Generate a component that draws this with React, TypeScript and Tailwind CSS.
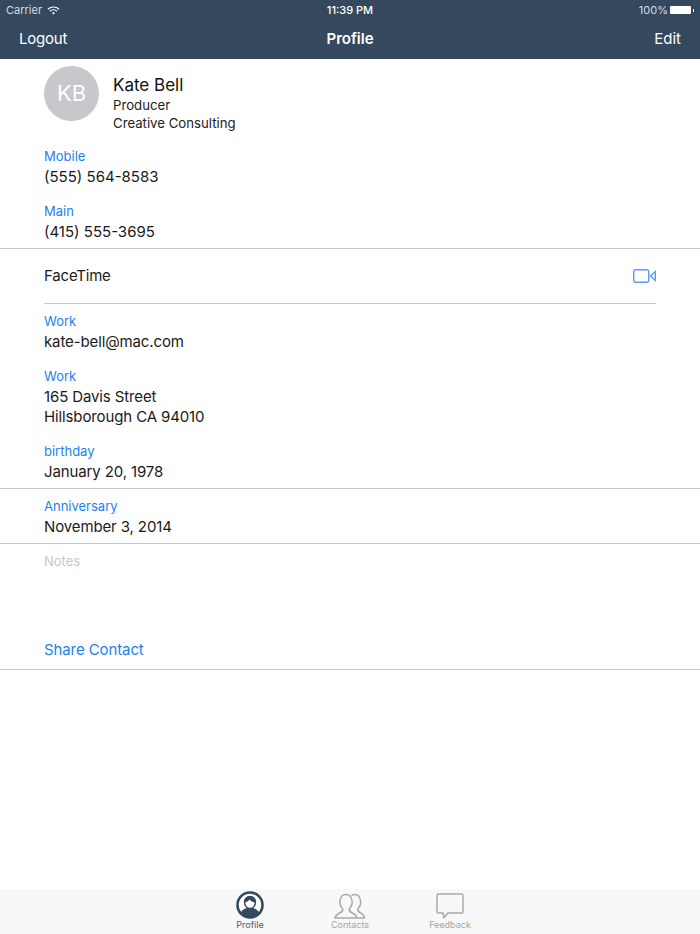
const font = "font-['Inter','Liberation_Sans',sans-serif]";

function Field({ label, lines, h, noteColor, wide }: { label: string; lines: string[]; h: string; noteColor?: boolean; wide?: boolean }) {
  return (
    <div className={`px-11 ${h}`}>
      <div className={`text-[13px] leading-[21px] ${noteColor ? "text-[#c7c7cc]" : "text-[#1d7ff2]"}`}>{label}</div>
      {lines.map((l) => (
        <div key={l} className={`text-[15px] leading-[20px] text-[#1a1a1a] ${wide ? "" : "tracking-[-0.12px]"}`}>{l}</div>
      ))}
    </div>
  );
}

function Tab({ label, active, children }: { label: string; active?: boolean; children: React.ReactNode }) {
  return (
    <div className="w-[100px] flex flex-col items-center">
      <div className="h-[28px] flex items-end">{children}</div>
      <div className={`text-[9px] leading-[11px] ${active ? "text-[#4a5a6c]" : "text-[#a5a5a5]"}`}>{label}</div>
    </div>
  );
}

export default function App() {
  return (
    <div className={`${font} w-[700px] h-[934px] bg-white flex flex-col overflow-hidden`}>
      <div className="h-[59px] bg-[#34495e] text-white shrink-0">
        <div className="h-[20px] grid grid-cols-3 items-center px-[6px] text-[11px]">
          <div className="flex items-center gap-[5px] text-[#d5dbe1]">
            Carrier
            <svg width="13" height="9" viewBox="0 0 13 9" fill="none" stroke="#fff" strokeWidth="1.2">
              <path d="M1 3.2a8 8 0 0 1 11 0M3 5.2a5 5 0 0 1 7 0" />
              <path d="M6.5 8.6 4.9 6.9a2.3 2.3 0 0 1 3.2 0z" fill="#fff" stroke="none" />
            </svg>
          </div>
          <div className="text-center font-medium">11:39 PM</div>
          <div className="flex items-center justify-end gap-[2px] text-[#d5dbe1]">
            100%
            <div className="w-[21px] h-[8px] bg-white rounded-[1px]" />
            <div className="w-[1px] h-[3px] bg-white" />
          </div>
        </div>
        <div className="h-[39px] grid grid-cols-3 items-center px-[19px] text-[15px]">
          <span className="tracking-[-0.2px]">Logout</span>
          <span className="font-semibold text-center">Profile</span>
          <span className="text-right">Edit</span>
        </div>
      </div>

      <div className="flex-1">
        <div className="h-[81px] pl-11 pt-[7px] flex gap-[14px]">
          <div className="w-[55px] h-[55px] rounded-full bg-[#c7c7cc] text-white text-[22px] flex items-center justify-center">KB</div>
          <div className="pt-[8px]">
            <div className="text-[17px] leading-[22px] text-[#111]">Kate Bell</div>
            <div className="text-[13.2px] leading-[18px] text-[#222]">Producer</div>
            <div className="text-[13.2px] leading-[18px] text-[#222]">Creative Consulting</div>
          </div>
        </div>
        <Field label="Mobile" lines={["(555) 564-8583"]} h="h-[55px] pt-[6px]" wide />
        <Field label="Main" lines={["(415) 555-3695"]} h="h-[53px] pt-[6px]" wide />
        <div className="h-px bg-[#c8c8c8]" />
        <div className="mx-11 h-[55px] flex items-center justify-between border-b border-[#c8c8c8] text-[15px] tracking-[-0.2px] text-[#1a1a1a]">
          FaceTime
          <svg width="23" height="14" viewBox="0 0 23 14" fill="none" stroke="#5b9bf8" strokeWidth="1.4">
            <rect x="0.7" y="0.7" width="15" height="12.600" rx="2" />
            <path d="M17.500 7 22.300 2.500v9z" />
          </svg>
        </div>
        <Field label="Work" lines={["kate-bell@mac.com"]} h="h-[55px] pt-[7px]" />
        <Field label="Work" lines={["165 Davis Street", "Hillsborough CA 94010"]} h="h-[75px] pt-[7px]" />
        <Field label="birthday" lines={["January 20, 1978"]} h="h-[54px] pt-[7px]" />
        <div className="h-px bg-[#c8c8c8]" />
        <Field label="Anniversary" lines={["November 3, 2014"]} h="h-[54px] pt-[7px]" />
        <div className="h-px bg-[#c8c8c8]" />
        <Field label="Notes" lines={[]} h="h-[91px] pt-[7px]" noteColor />
        <div className="px-11 h-[35px] pt-[3px] text-[15px] tracking-[-0.1px] leading-[24px] text-[#1d7ff2] border-b border-[#c8c8c8]">Share Contact</div>
      </div>

      <div className="h-[45px] bg-[#f8f8f8] flex justify-center shrink-0 pt-[2px]">
        <Tab label="Profile" active>
          <svg width="28" height="28" viewBox="0 0 28 28">
            <circle cx="14" cy="14" r="12.5" fill="#fff" stroke="#34495e" strokeWidth="2.6" />
            <path d="M4.500 22c1.500-3.500 5-4.500 7.500-5.500h4c2.500 1 6 2 7.500 5.500a12 12 0 0 1-19 0z" fill="#34495e" />
            <path d="M14 5.500c-3.500 0-5.500 2.500-5.500 5.500 0 3 2 6.500 5.500 6.500s5.500-3.500 5.500-6.500c0-3-2-5.500-5.500-5.500z" fill="#fff" stroke="#34495e" strokeWidth="1.400" />
            <path d="M8.500 11.500c2.500-.5 4-1.500 5-3 1.500 2 3.500 3 6 3 .5-3.500-2-6-5.500-6s-6 2.500-5.500 6z" fill="#34495e" />
          </svg>
        </Tab>
        <Tab label="Contacts">
          <svg width="32" height="26" viewBox="0 0 32 26" fill="none" stroke="#a9a9a9" strokeWidth="1.500">
            <path d="M1 25c.5-3 2.500-4 5.500-5.500 2-1 3-2 2-4-2-2-3-5-2.500-8C6.500 4 8.500 1.500 12 1.500S17.500 4 18 7.500c.5 3-.5 6-2.500 8-1 2 0 3 2 4 3 1.500 5 2.500 5.500 5.500z" />
            <path d="M17.500 2.500c1-.7 2-1 3.500-1 3 0 5 2.500 5.500 6 .5 3-.5 6-2.500 8-1 2 0 3 2 4 2.500 1.200 4 2 4.500 5.500h-7" />
          </svg>
        </Tab>
        <Tab label="Feedback">
          <svg width="28" height="26" viewBox="0 0 28 26" fill="none" stroke="#a9a9a9" strokeWidth="1.500">
            <path d="M2.500 1h23A1.500 1.500 0 0 1 27 2.500v16a1.500 1.500 0 0 1-1.500 1.500H12l-4 4.500-1-4.500H2.500A1.500 1.500 0 0 1 1 18.500v-16A1.500 1.500 0 0 1 2.500 1z" />
          </svg>
        </Tab>
      </div>
    </div>
  );
}
